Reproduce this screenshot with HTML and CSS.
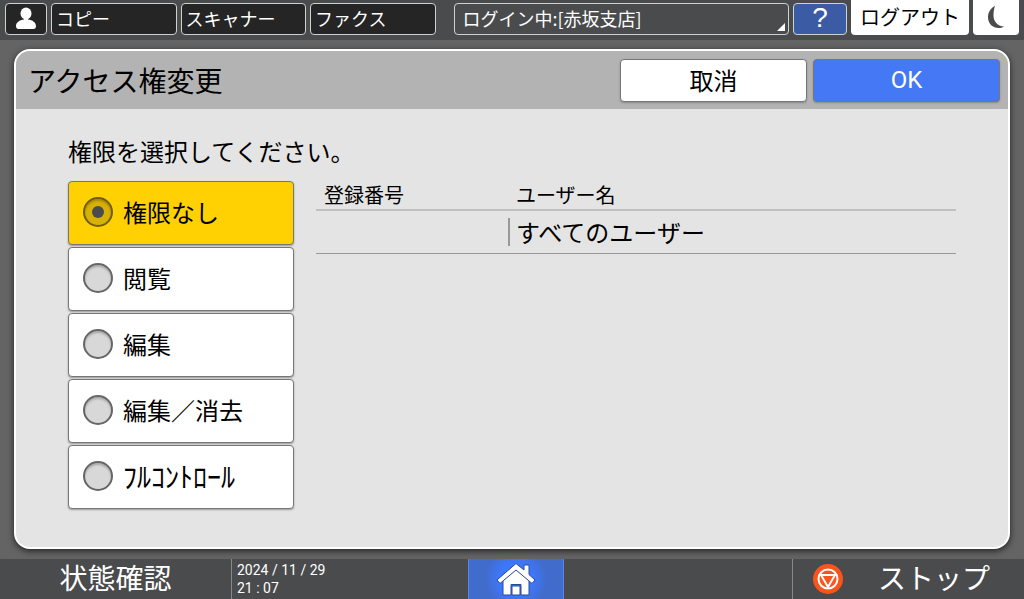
FILE: index.html
```html
<!DOCTYPE html>
<html lang="ja">
<head>
    <meta charset="UTF-8">
    <meta name="viewport" content="width=device-width, initial-scale=1.0">
    <title>アクセス権変更</title>
    <link rel="stylesheet" href="styles.css">
</head>
<body>
    <header class="topbar">
        <button type="button" class="key user-key" aria-label="ユーザー">
            <svg width="22" height="24" viewBox="0 0 22 24" fill="#fff">
                <ellipse cx="11" cy="7.500" rx="5.500" ry="6"/>
                <path d="M9 12h4v1.500c4.500.5 8 3 8 6.500 0 1.700-1 3-2.500 3h-15C2 23 1 21.700 1 20c0-3.500 3.500-6 8-6.500z"/>
            </svg>
        </button>
        <button type="button" class="key app-key">コピー</button>
        <button type="button" class="key app-key">スキャナー</button>
        <button type="button" class="key app-key">ファクス</button>
        <button type="button" class="key login-key">ログイン中:[赤坂支店]</button>
        <button type="button" class="key help-key" aria-label="ヘルプ">?</button>
        <button type="button" class="key logout-key">ログアウト</button>
        <button type="button" class="key sleep-key" aria-label="省エネ">
            <svg width="18" height="24" viewBox="0 0 18 24">
                <path d="M8 1C4 3 1 7 1 12c0 7 5 11 10.500 11 2 0 4-.5 5.500-1.500C10.500 21 6.500 16.500 6.500 10.500 6.500 6.500 7 3.500 8 1z" fill="#4a4b4d"/>
            </svg>
        </button>
    </header>

    <main class="panel">
        <div class="panel-header">
            <h1>アクセス権変更</h1>
            <button type="button" class="action">取消</button>
            <button type="submit" form="access-form" class="action ok">OK</button>
        </div>

        <form id="access-form" class="panel-body">
            <h2 id="access-title">権限を選択してください。</h2>
            <div class="columns">
                <div class="options" role="radiogroup" aria-labelledby="access-title">
                    <label class="option"><input type="radio" name="access" value="none" checked>権限なし</label>
                    <label class="option"><input type="radio" name="access" value="read">閲覧</label>
                    <label class="option"><input type="radio" name="access" value="edit">編集</label>
                    <label class="option"><input type="radio" name="access" value="delete">編集／消去</label>
                    <label class="option narrow"><input type="radio" name="access" value="full">ﾌﾙｺﾝﾄﾛｰﾙ</label>
                </div>
                <table class="users">
                    <thead>
                        <tr><th class="number">登録番号</th><th>ユーザー名</th></tr>
                    </thead>
                    <tbody>
                        <tr><td></td><td><span class="user-name">すべてのユーザー</span></td></tr>
                    </tbody>
                </table>
            </div>
        </form>
    </main>

    <footer class="bottombar">
        <button type="button" class="status-key">状態確認</button>
        <div class="clock">
            <span>2024 / 11 / 29</span>
            <span>21 : 07</span>
        </div>
        <button type="button" class="home-key" aria-label="ホーム">
            <svg width="40" height="34" viewBox="0 0 40 34">
                <g fill="#fff" stroke="#284a9c" stroke-width="1">
                    <path d="M7 18.500 20 7l13 11.500V33h-8V22.500H15V33H7z"/>
                    <path d="M16 24h8v9h-8z"/>
                    <path d="M20 1.500 28 8V3h5v9.500l6 5.500-3 3.500L20 8 4 21.500 1 18z"/>
                </g>
            </svg>
        </button>
        <button type="button" class="stop-key">
            <svg width="30" height="30" viewBox="0 0 30 30">
                <circle cx="15" cy="15" r="15" fill="#f9541c"/>
                <g fill="none" stroke="#fff" stroke-width="2" stroke-linejoin="round">
                    <circle cx="15" cy="15" r="9.500"/>
                    <path d="M8 11h14l-7 12z"/>
                </g>
            </svg>
            <span>ストップ</span>
        </button>
    </footer>
</body>
</html>
```

FILE: styles.css
```css
* {
    box-sizing: border-box;
}

body {
    display: flex;
    flex-direction: column;
    min-height: 100vh;
    margin: 0;
    background: #646464;
    color: #000;
    font-family: "Noto Sans CJK JP", sans-serif;
    font-size: 24px;
    line-height: 32px;
}

button {
    margin: 0;
    padding: 0;
    border: 0;
    color: inherit;
    font: inherit;
    cursor: pointer;
}

svg {
    display: block;
}

/* top bar */
.topbar {
    display: flex;
    align-items: flex-end;
    gap: 4px;
    height: 40px;
    padding: 0 5px 5px;
    background: #4a4b4d;
    color: #fff;
}

.key {
    display: flex;
    align-items: center;
    height: 32px;
    padding: 0 4px 2px;
    border: 1px solid #d0d0d0;
    border-radius: 4px;
    background: #252525;
    font-size: 18px;
    line-height: 28px;
    white-space: nowrap;
}

.user-key {
    justify-content: center;
    width: 42px;
}

.app-key {
    flex: 1 1 125px;
}

.login-key {
    position: relative;
    flex: 1 1 335px;
    margin-left: 14px;
    padding: 0 8px 2px;
    background: #4a4b4d;
}

.login-key::after {
    content: "";
    position: absolute;
    right: 3px;
    bottom: 3px;
    border-bottom: 8px solid #fff;
    border-left: 8px solid transparent;
}

.help-key {
    justify-content: center;
    width: 54px;
    background: #3b5ba5;
    font-family: "Liberation Sans", sans-serif;
    font-size: 28px;
}

.logout-key,
.sleep-key {
    justify-content: center;
    height: 35px;
    border: 0;
    border-radius: 0 0 4px 4px;
    background: #fff;
    color: #000;
}

.logout-key {
    width: 118px;
    font-size: 20px;
}

.sleep-key {
    width: 46px;
}

/* panel */
.panel {
    display: flex;
    flex: 1;
    flex-direction: column;
    margin: 9px 14px 10px;
    border: 2px solid #fff;
    border-radius: 16px;
    background: #e4e4e4;
    box-shadow: 0 2px 6px #222;
    overflow: hidden;
}

.panel-header {
    display: flex;
    align-items: center;
    gap: 6px;
    height: 58px;
    padding: 0 8px 0 12px;
    background: #b3b3b3;
}

h1 {
    flex: 1;
    margin: 0;
    font-size: 28px;
    font-weight: 400;
}

.action {
    width: 187px;
    height: 43px;
    border: 1px solid #777;
    border-radius: 4px;
    background: #fff;
    box-shadow: 0 1px 2px #888;
}

.ok {
    background: #4478f4;
    color: #fff;
    font-family: Roboto, sans-serif;
}

.panel-body {
    padding: 26px 52px;
}

h2 {
    margin: 0 0 14px;
    font-size: 24px;
    font-weight: 400;
}

.columns {
    display: flex;
    align-items: flex-start;
    gap: 22px;
}

.options {
    display: grid;
    gap: 2px;
    width: 226px;
}

.option {
    display: flex;
    align-items: center;
    gap: 10px;
    height: 64px;
    padding: 0 14px 2px;
    border: 1px solid #777;
    border-radius: 4px;
    background: #fff;
    box-shadow: 0 1px 2px #999;
    cursor: pointer;
}

.option:has(input:checked) {
    background: #ffd103;
}

.narrow {
    font-size: 28px;
}

.option input {
    appearance: none;
    display: grid;
    place-items: center;
    width: 30px;
    height: 30px;
    margin: 0;
    border: 2px solid #666;
    border-radius: 50%;
    background: #d8d8d8;
    box-shadow: inset 0 2px 2px #aaa;
}

.option input:checked {
    border-color: #705c0c;
    background: #d8b106;
    box-shadow: inset 0 2px 2px #a88a08;
}

.option input:checked::before {
    content: "";
    width: 12px;
    height: 12px;
    border-radius: 50%;
    background: #4a4b4d;
}

.users {
    flex: 1;
    border-collapse: collapse;
    table-layout: fixed;
}

.users th {
    height: 29px;
    padding: 0 8px;
    border-bottom: 2px solid #c0c0c0;
    font-size: 20px;
    font-weight: 400;
    line-height: 28px;
    text-align: left;
}

.users .number {
    width: 30%;
}

.users td {
    height: 43px;
    padding: 0;
    border-bottom: 1px solid #999;
}

.user-name {
    display: block;
    padding-left: 6px;
    border-left: 2px solid #999;
    line-height: 28px;
}

/* bottom bar */
.bottombar {
    display: grid;
    grid-template-columns: 231px 237fr 96px 228fr 232px;
    height: 40px;
    background: #4a4b4d;
    color: #fff;
}

.status-key,
.stop-key {
    background: none;
    font-size: 28px;
}

.status-key {
    padding-bottom: 4px;
}

.clock {
    display: flex;
    flex-direction: column;
    padding: 2px 5px;
    border-left: 1px solid #888;
    font-family: Roboto, sans-serif;
    font-size: 14px;
    line-height: 18px;
}

.home-key {
    display: flex;
    justify-content: center;
    padding-top: 3px;
    border: solid #5583f0;
    border-width: 0 1px;
    background: radial-gradient(circle, #3c78ff 30%, #426ccc 60%);
}

.stop-key {
    display: flex;
    grid-column: 5;
    align-items: center;
    justify-content: space-between;
    padding: 0 34px 0 20px;
    border-left: 1px solid #888;
}

.stop-key span {
    padding-bottom: 4px;
}
```
